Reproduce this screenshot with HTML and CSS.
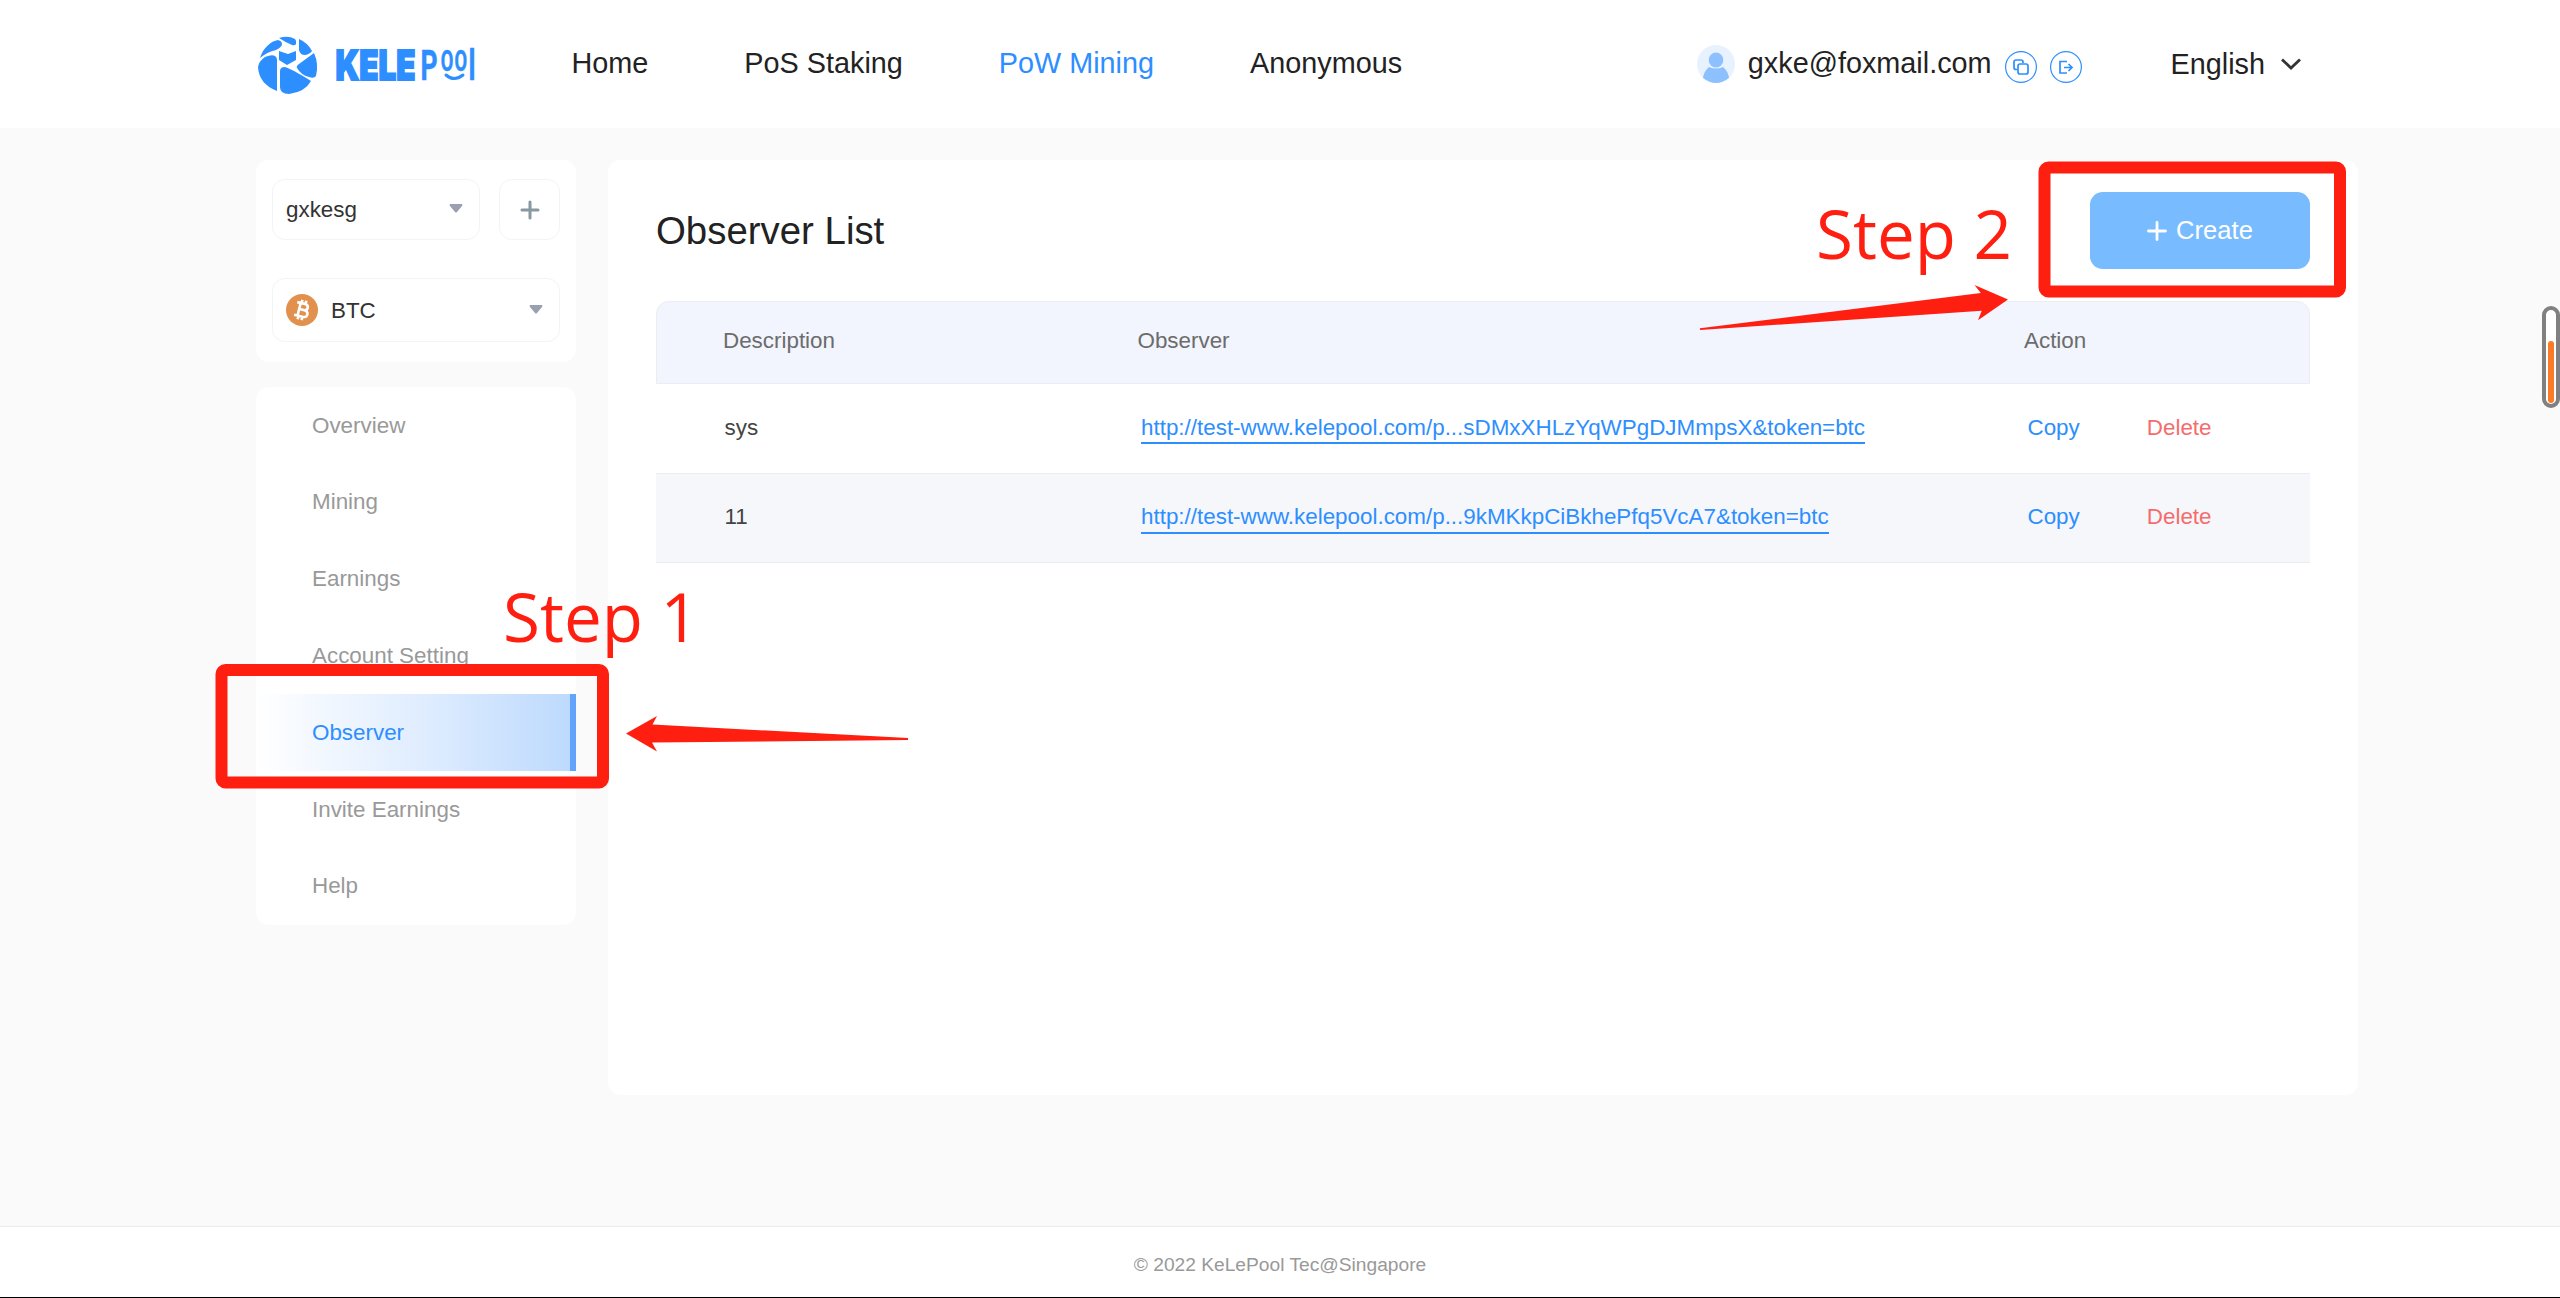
FILE: index.html
```html
<!DOCTYPE html>
<html lang="en">
<head>
<meta charset="utf-8">
<title>KelePool - Observer List</title>
<link rel="stylesheet" href="styles.css">
</head>
<body>
<header class="topbar">
  <svg class="logo" width="220" height="60" viewBox="0 0 220 60" role="img" aria-label="KelePool">
    <g fill="#2d8eff">
      <path d="M2 22C5 12 13 5 20 4Q24 5 24 8Q24 11 18 14Q9 16 2 22Z"/>
      <path d="M21 2Q30-1 37 3Q39 5 38 8Q37 10 34 9Q27 6 21 2Z"/>
      <path d="M41 3Q50 7 54 15Q52 18 47 19Q42 19 41 14Z"/>
      <path d="M21 15L30 18L38 15V24L29 29Q24 26 21 24Z"/>
      <path d="M56 17Q61 28 58 40Q56 43 51 41Q43 39 39 32Q38 30 41 28Z"/>
      <path d="M0 31Q1 25 7 21Q14 18 17 20Q19 21 19 24V55Q1 48 0 31Z"/>
      <path d="M22 35Q22 31 27 31Q34 33 53 45Q47 56 31 58Q22 58 22 51Z"/>
    </g>
    <g class="logo-text">
      <text class="logo-kele" x="77.500" y="44" textLength="80" lengthAdjust="spacingAndGlyphs">KELE</text>
      <text class="logo-pool" y="44" transform="scale(.63 1)"><tspan x="258">P</tspan><tspan class="logo-oo" x="290 312" y="35">OO</tspan><tspan x="334" y="44">l</tspan></text>
    </g>
    <path d="M188 39Q196 46 205 39" fill="none" stroke="#2d8eff" stroke-width="3" stroke-linecap="round"/>
  </svg>
  <nav class="nav">
    <a>Home</a><a>PoS Staking</a><a class="current">PoW Mining</a><a>Anonymous</a>
  </nav>
  <div class="account">
    <svg width="38" height="38" viewBox="0 0 38 38"><circle cx="19" cy="19" r="19" fill="#e8f2ff"/><ellipse cx="19" cy="15" rx="7.300" ry="7.500" fill="#8cc0ff"/><path d="M6 33Q7 26 12 22Q19 25 26 22Q31 26 32 33Q19 43 6 33Z" fill="#8cc0ff"/></svg>
    <span class="email">gxke@foxmail.com</span>
    <svg class="round-icon" width="32" height="32" viewBox="0 0 32 32" fill="none" stroke="#2d8eff"><circle cx="16" cy="16" r="15.400" stroke-width="1.200"/><path d="M12 18.500H11Q9 18.500 9 16.500V11Q9 9 11 9H16Q18 9 18 11V12" stroke-width="1.700"/><rect x="13" y="13" width="10" height="10" rx="2" stroke-width="1.700"/></svg>
    <svg class="round-icon" width="32" height="32" viewBox="0 0 32 32" fill="none" stroke="#2d8eff"><circle cx="16" cy="16" r="15.400" stroke-width="1.200"/><path d="M17 10.500H10V22H17M14 16.500H22M18.500 13L22 16.500L18.500 20" stroke-width="1.700"/></svg>
  </div>
  <div class="language">
    <span>English</span>
    <svg width="22" height="14" viewBox="0 0 22 14"><path d="M2 2.500L11 11L20 2.500" fill="none" stroke="#333" stroke-width="2.800"/></svg>
  </div>
</header>

<div class="page">
  <aside class="sidebar">
    <section class="card selectors">
      <div class="selector-row">
        <div class="select"><span>gxkesg</span><svg width="14" height="10" viewBox="0 0 14 10"><path d="M1 0H13Q14 1 13 2L8 8Q7 9 6 8L1 2Q0 1 1 0Z" fill="#9aa0af"/></svg></div>
        <button class="add" aria-label="Add account"><svg width="20" height="20" viewBox="0 0 20 20"><path d="M10 2V18M2 10H18" stroke="#8798a3" stroke-width="3" stroke-linecap="round"/></svg></button>
      </div>
      <div class="select coin">
        <svg width="32" height="32" viewBox="0 0 32 32"><circle cx="16" cy="16" r="16" fill="#e2904d"/><g transform="rotate(14 16 16)" fill="none" stroke="#fff" stroke-width="2.600"><path d="M9.500 9.500H17.500Q21 9.500 21 12.600Q21 15.700 17.500 15.700H13.500M17.500 15.700Q22.300 15.700 22.300 19.100Q22.300 22.500 18 22.500H9.500M13 9.500V22.500M14 6V9.500M18 6V9.500M14 22.500V26M18 22.500V26"/></g></svg>
        <span>BTC</span><svg width="14" height="10" viewBox="0 0 14 10"><path d="M1 0H13Q14 1 13 2L8 8Q7 9 6 8L1 2Q0 1 1 0Z" fill="#9aa0af"/></svg>
      </div>
    </section>
    <nav class="card menu">
      <a>Overview</a><a>Mining</a><a>Earnings</a><a>Account Setting</a><a class="active">Observer</a><a>Invite Earnings</a><a>Help</a>
    </nav>
  </aside>
  <main class="card content">
    <div class="title-row">
      <h1>Observer List</h1>
      <button class="create"><svg width="20" height="20" viewBox="0 0 20 20"><path d="M10 1.500V18.500M1.500 10H18.500" stroke="#fff" stroke-width="2.800" stroke-linecap="round"/></svg>Create</button>
    </div>
    <div class="table">
      <div class="row head"><span>Description</span><span>Observer</span><span>Action</span></div>
      <div class="row"><span>sys</span><span><a class="link">http://test-www.kelepool.com/p...sDMxXHLzYqWPgDJMmpsX&amp;token=btc</a></span><span class="actions"><a class="copy">Copy</a><a class="delete">Delete</a></span></div>
      <div class="row striped"><span>11</span><span><a class="link">http://test-www.kelepool.com/p...9kMKkpCiBkhePfq5VcA7&amp;token=btc</a></span><span class="actions"><a class="copy">Copy</a><a class="delete">Delete</a></span></div>
    </div>
  </main>
</div>
<footer class="footer">© 2022 KeLePool Tec@Singapore</footer>

<div class="gauge"><div class="gauge-fill"></div></div>
<svg class="annotations" width="2560" height="1298" viewBox="0 0 2560 1298">
  <g fill="none" stroke="#ff1f10" stroke-width="12">
    <rect x="221.500" y="670" width="381.500" height="112.500" rx="4"/>
    <rect x="2044.500" y="167.500" width="295.500" height="124" rx="4"/>
  </g>
  <g fill="#ff1f10">
    <path d="M626 733.500L657 716L652.500 724.500L908 738V740L652 742.500L657 751.500Z"/>
    <path d="M2008 299.500L1974.500 285L1980.800 293L1700 328.300V330L1981.700 310.700L1978 320.300Z"/>
    <text x="503" y="642" textLength="196" lengthAdjust="spacingAndGlyphs">Step 1</text>
    <text x="1816" y="259" textLength="196" lengthAdjust="spacingAndGlyphs">Step 2</text>
  </g>
</svg>
</body>
</html>
```
FILE: styles.css
```css
* { box-sizing: border-box; }
body {
  margin: 0;
  height: 1298px;
  display: flex;
  flex-direction: column;
  position: relative;
  overflow: hidden;
  background: #fafafa;
  color: #222;
  font-family: "Liberation Sans", Arial, sans-serif;
  font-size: 22.4px;
}
svg { display: block; flex: none; }
button { font: inherit; padding: 0; }

.topbar {
  height: 128px;
  flex: none;
  display: flex;
  align-items: center;
  padding: 0 258px 0 258px;
  background: #fff;
  font-size: 28.8px;
}
.logo { margin-top: 3px; overflow: visible; }
.logo-text { fill: #2d8eff; }
.logo-kele { font: 900 41px Inter, sans-serif; stroke: #2d8eff; stroke-width: 1.8; }
.logo-pool { font: 700 42px Roboto, sans-serif; stroke: #2d8eff; stroke-width: .5; }
.logo-oo { font-size: 29px; }
.nav { display: flex; gap: 96px; margin-left: 93.5px; padding-bottom: 2px; }
.nav .current { color: #2d8eff; }
.account { display: flex; align-items: center; margin-left: auto; }
.email { margin: 0 13px 2px 13px; }
.round-icon { margin: 6px 13px 0 0; }
.language { display: flex; align-items: center; gap: 15px; margin-left: 76px; }

.page { display: flex; align-items: flex-start; gap: 32px; padding: 32px 202px 0 256px; flex: 1; }
.card { background: #fff; border-radius: 12.8px; }
.sidebar { width: 320px; flex: none; }
.selectors { height: 202px; padding: 19px 16px; }
.selector-row { display: flex; gap: 19px; margin-bottom: 38px; }
.select {
  flex: 1;
  height: 61px;
  display: flex;
  align-items: center;
  padding: 0 16px 0 13px;
  border: 1px solid #f3f4f5;
  border-radius: 12.8px;
  color: #333;
}
.select span { flex: 1; }
.select > svg:last-child { margin-bottom: 1px; }
.coin { height: 64px; }
.coin span { margin-left: 13px; padding-top: 1px; }
.add {
  width: 61px;
  display: flex;
  align-items: center;
  justify-content: center;
  border: 1px solid #f3f4f5;
  border-radius: 12.8px;
  background: #fff;
}
.menu { margin-top: 25.2px; overflow: hidden; }
.menu a { display: flex; align-items: center; height: 76.8px; padding-left: 56px; color: #999; }
.menu .active {
  color: #2d8eff;
  background: linear-gradient(90deg, #fff, #deecff 55%, #bddafd);
  border-right: 6px solid #62a3fb;
}

.content { flex: 1; height: 935px; padding: 32px 48px; }
.title-row { display: flex; justify-content: space-between; align-items: center; height: 77px; }
h1 { margin: 0; font-size: 38.4px; font-weight: 400; }
.create {
  width: 220px;
  height: 77px;
  display: flex;
  align-items: center;
  justify-content: center;
  gap: 9px;
  border: 0;
  border-radius: 12.8px;
  background: #79bbff;
  color: #fff;
  font-size: 25.6px;
}
.table { margin-top: 32px; color: #444; }
.row {
  display: grid;
  grid-template-columns: 416.5px 886.5px 1fr;
  align-items: center;
  height: 89.5px;
  padding: 0 0 1px 68.5px;
  border-bottom: 1px solid #ebeef0;
}
.head {
  height: 83px;
  padding: 0 0 4px 66px;
  grid-template-columns: 414.5px 886.5px 1fr;
  background: #f2f5fd;
  border: 1px solid #ebeef0;
  border-radius: 12.8px 12.8px 0 0;
  color: #6c6c6c;
}
.striped { background: #f5f7fb; }
.link { color: #2d8eff; border-bottom: 2px solid #2d8eff; padding-bottom: 2.5px; }
.actions { display: flex; gap: 67px; }
.copy { color: #2d8eff; }
.delete { color: #f56c6c; }

.footer {
  height: 72px;
  flex: none;
  display: flex;
  align-items: center;
  justify-content: center;
  padding-top: 6px;
  background: #fff;
  border-top: 1px solid #ebebeb;
  border-bottom: 1px solid #000;
  color: #999;
  font-size: 19.2px;
}
.gauge {
  position: absolute;
  left: 2542px;
  top: 306px;
  width: 18px;
  height: 102px;
  display: flex;
  align-items: flex-end;
  justify-content: center;
  padding-bottom: 1px;
  border: 4px solid #808080;
  border-radius: 9px;
  background: #fff;
}
.gauge-fill { width: 6px; height: 62px; border-radius: 3px; background: #fd7a26; }
.annotations { position: absolute; left: 0; top: 0; pointer-events: none; }
.annotations text { font: 68px "Open Sans", "Noto Sans", sans-serif; }
```
